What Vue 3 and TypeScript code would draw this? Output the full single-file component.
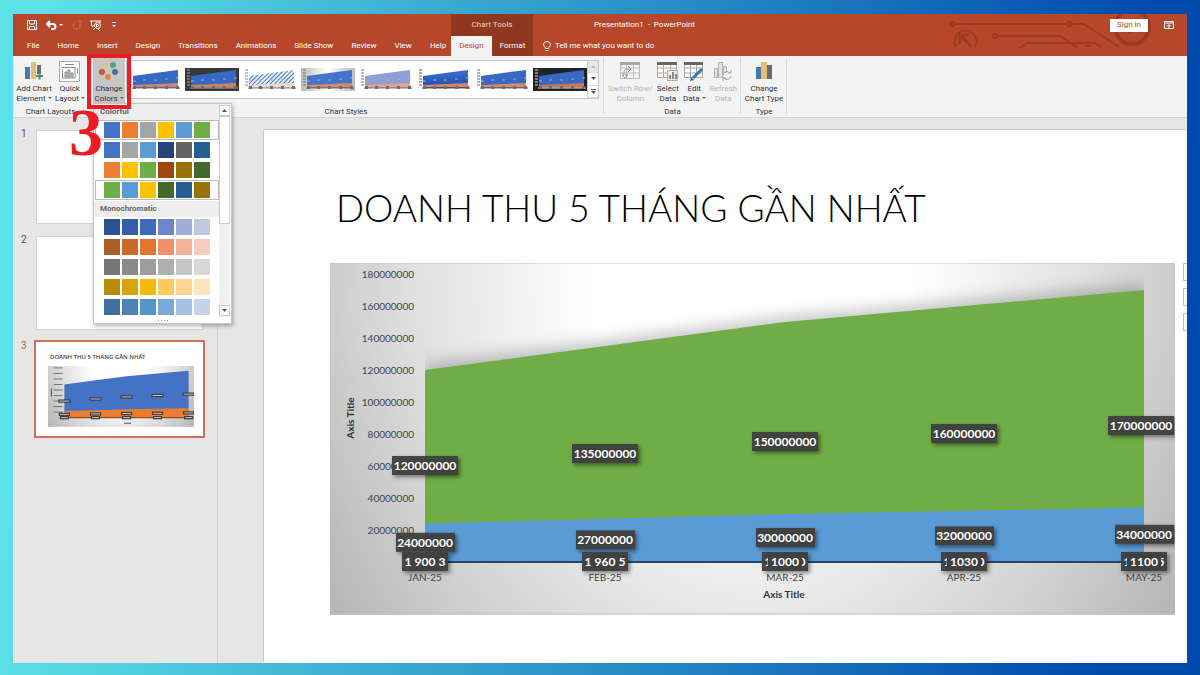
<script setup lang="ts">
interface Point { label: string; high: number; low: number; front: string; first: string; last: string }

const tabs: string[] = ['File', 'Home', 'Insert', 'Design', 'Transitions', 'Animations', 'Slide Show', 'Review', 'View', 'Help']

const points: Point[] = [
  { label: 'JAN-25', high: 120, low: 24, front: '900', first: '1', last: '3' },
  { label: 'FEB-25', high: 135, low: 27, front: '960', first: '1', last: '5' },
  { label: 'MAR-25', high: 150, low: 30, front: '1000', first: '1', last: '0' },
  { label: 'APR-25', high: 160, low: 32, front: '1030', first: '1', last: '0' },
  { label: 'MAY-25', high: 170, low: 34, front: '1100', first: '1', last: '5' },
]
const ticks: number[] = [180, 160, 140, 120, 100, 80, 60, 40, 20]

const baseY = 299
const px = (i: number): number => Math.round(95 + (i * 719) / 4)
const py = (v: number): number => baseY - v * 1.6
const area = (key: 'high' | 'low'): string =>
  `${px(0)},${baseY} ` + points.map((p, i) => `${px(i)},${py(p[key])}`).join(' ') + ` ${px(4)},${baseY}`
const highArea = area('high')
const lowArea = area('low')

const colorful: string[][] = [
  ['#4472c4', '#ed7d31', '#a5a5a5', '#ffc000', '#5b9bd5', '#70ad47'],
  ['#4472c4', '#a5a5a5', '#5b9bd5', '#264478', '#636363', '#255e91'],
  ['#ed7d31', '#ffc000', '#70ad47', '#9e480e', '#997300', '#43682b'],
  ['#70ad47', '#5b9bd5', '#ffc000', '#43682b', '#255e91', '#997300'],
]
const mono: string[][] = [
  ['#2b5293', '#355fa8', '#3f6bbd', '#6c86c9', '#a0add7', '#c1c9e2'],
  ['#ac5c25', '#c96a2c', '#e2772f', '#ef926b', '#f3b199', '#f5cdbf'],
  ['#777777', '#8a8a8a', '#9d9d9d', '#afafaf', '#c6c6c6', '#d7d7d7'],
  ['#b88c08', '#d8a40c', '#f3b90d', '#ffca5c', '#ffd591', '#ffe2bb'],
  ['#41709c', '#4c82b5', '#5794ca', '#79a9d6', '#a5c0e0', '#c4d5ea'],
]

interface Look { bg: string; fill: string; strip: string; ink: string }
const looks: Look[] = [
  { bg: '#ffffff', fill: '#3668c4', strip: '#c98a6c', ink: '#777777' },
  { bg: '#383838', fill: '#3668c4', strip: '#d28256', ink: '#a8a8a8' },
  { bg: '#ffffff', fill: 'url(#hatch)', strip: '#f0d8ca', ink: '#888888' },
  { bg: 'url(#softGrey)', fill: '#4474ca', strip: '#d58a68', ink: '#777777' },
  { bg: '#ffffff', fill: '#8f9fd6', strip: '#e3a48f', ink: '#777777' },
  { bg: '#ffffff', fill: 'url(#deepBlue)', strip: '#d98560', ink: '#555555' },
  { bg: '#ffffff', fill: '#3668c4', strip: '#dd8a62', ink: '#666666' },
  { bg: '#202328', fill: '#3668c4', strip: '#d2764a', ink: '#dddddd' },
]
</script>

<template>
  <div class="page">
    <div class="window">
      <header class="titlebar">
        <svg class="circuit" viewBox="0 0 204 34" width="204" height="34" fill="none" stroke="#9d3b21" stroke-width="2" aria-hidden="true">
          <circle cx="4" cy="10" r="2" /><path d="M7 10H118" /><circle cx="121" cy="10" r="2" /><path d="M124 10H136L171 33" />
          <circle cx="47" cy="22" r="2" /><path d="M50 22H112L129 33" />
          <path d="M72 34L79 29H137M143 29H147L153 33" /><circle cx="140" cy="30" r="2" />
          <path d="M8 33A11 11 0 1 1 27 33" stroke-width="2" /><path d="M12 30V21H21M12 21L23 32" stroke-width="3" />
          <circle cx="184" cy="13" r="17" stroke-width="4" /><path d="M172 17l6-5 4 5 8-6 5 6" stroke-width="4" />
        </svg>

        <div class="head-left">
          <div class="quick">
            <button aria-label="Save"><svg width="10" height="10" viewBox="0 0 10 10" fill="none" stroke="#fff"><path d="M.5.5h9v9h-9zM2.500.5v3.500h5v-3.500M2.500 9.500v-3h5v3" /></svg></button>
            <button aria-label="Undo"><svg width="17" height="10" viewBox="0 0 17 10" fill="none" stroke="#fff"><path d="M4 1L1 4l3 3M1.500 4H7a2 2 0 0 1 0 5H5" stroke-width="2" /><path d="M13 4h4l-2 2z" fill="#fff" stroke="none" /></svg></button>
            <button aria-label="Repeat"><svg width="9" height="10" viewBox="0 0 9 10" fill="none" stroke="#d0735a"><path d="M7.500 3.500A3.500 3.500 0 1 1 4 2M5 0h3v3" /></svg></button>
            <button aria-label="Start slide show"><svg width="12" height="11" viewBox="0 0 12 11" fill="none" stroke="#fff"><path d="M0 1h11M1.500 1v5h3M3 10l3-3M10 1v2" /><circle cx="7.500" cy="5.500" r="3" /><path d="M6.500 4v3l2.500-1.500zM8 9l2 2" /></svg></button>
            <button aria-label="Customize toolbar"><svg width="6" height="6" viewBox="0 0 6 6" fill="#fff"><path d="M1 0h4v1H1zM1 3h4L3 5z" /></svg></button>
          </div>
          <nav class="tabs">
            <button v-for="t in tabs" :key="t">{{ t }}</button>
          </nav>
        </div>

        <div class="context">
          <div class="context-title">Chart Tools</div>
          <div class="tabs">
            <button class="active">Design</button>
            <button>Format</button>
          </div>
        </div>

        <div class="head-right">
          <div class="caption">
            <span class="doc">Presentation1 &nbsp;-&nbsp; PowerPoint</span>
            <button class="sign">Sign in</button>
            <button class="display" aria-label="Ribbon display options"><svg width="10" height="8" viewBox="0 0 10 8" fill="none" stroke="#fff"><path d="M.5.5h9v7h-9zM1 2h8" /><path d="M5 7V4M3 5.500l2-2 2 2" /></svg></button>
          </div>
          <button class="tell">
            <svg width="8" height="11" viewBox="0 0 8 11" fill="none" stroke="#fff"><path d="M2.500 7.500C2.500 6 .5 5.500.5 3.500a3.500 3 0 0 1 7 0C7.500 5.500 5.500 6 5.500 7.500zM2.500 9.500h3" /></svg>
            Tell me what you want to do
          </button>
        </div>
      </header>

      <div class="ribbon">
        <section class="group layouts">
          <div class="tools">
            <button class="tool">
              <svg width="20" height="21" viewBox="0 0 20 21"><path d="M1 6h5v12H1z" fill="#4a7ba8" /><path d="M7 1h5v17H7z" fill="#e5bd72" /><path d="M13 4h4v9h-4z" fill="#6d6d6d" /><path d="M12 15h7M15.500 11.500v7" stroke="#4f9068" stroke-width="2" /></svg>
              <span>Add Chart<br />Element<i class="caret"></i></span>
            </button>
            <button class="tool">
              <svg width="21" height="21" viewBox="0 0 21 21" fill="none" stroke="#8a8a8a"><path d="M.5.5h20v20H.5z" fill="#fff" stroke="#aaa" /><path d="M6 3.500h9M3 6.500h14M3.500 9v8H16V6.500M18.500 7v5" /><path d="M6 11h2v5H6zM9 9h2v7H9zM12 12h2v4h-2z" fill="#ccc" /></svg>
              <span>Quick<br />Layout<i class="caret"></i></span>
            </button>
          </div>
          <h2>Chart Layouts</h2>
        </section>

        <section class="group styles">
          <div class="tools">
            <div class="picker">
              <button class="tool pressed">
                <svg width="20" height="21" viewBox="0 0 20 21"><circle cx="6" cy="4" r="3" fill="#e3c07d" /><circle cx="14" cy="4" r="3" fill="#5e9e80" /><circle cx="3" cy="11" r="3" fill="#cc5239" /><circle cx="16" cy="11" r="3" fill="#3f73a8" /><circle cx="9" cy="16" r="3" fill="#dd8b42" /></svg>
                <span>Change<br />Colors<i class="caret"></i></span>
              </button>
              <div class="menu">
                <div class="menu-main">
                  <div class="palette">
                    <h3>Colorful</h3>
                    <button v-for="(row, r) in colorful" :key="r" class="row" :class="{ marked: r === 0 || r === 3 }" :aria-label="'Colorful ' + (r + 1)">
                      <i v-for="c in row" :key="c" :style="{ background: c }"></i>
                    </button>
                    <h3 class="second">Monochromatic</h3>
                    <button v-for="(row, r) in mono" :key="r" class="row" :aria-label="'Monochromatic ' + (r + 1)">
                      <i v-for="c in row" :key="c" :style="{ background: c }"></i>
                    </button>
                  </div>
                  <div class="scroll">
                    <button aria-label="Scroll up"><svg width="5" height="3" viewBox="0 0 5 3"><path d="M0 3L2.500 0 5 3z" fill="#555" /></svg></button>
                    <div class="thumb"></div>
                    <button class="down" aria-label="Scroll down"><svg width="5" height="3" viewBox="0 0 5 3"><path d="M0 0h5L2.500 3z" fill="#555" /></svg></button>
                  </div>
                </div>
                <div class="grip"><b></b><b></b><b></b><b></b></div>
              </div>
              <div class="frame"></div>
              <div class="step">3</div>
            </div>
            <div class="gallery">
              <div class="looks">
                <button v-for="(k, n) in looks" :key="n" :aria-label="'Style ' + (n + 1)">
                  <svg width="54" height="23" viewBox="0 0 54 23">
                    <defs v-if="n === 0">
                      <pattern id="hatch" width="3" height="3" patternUnits="userSpaceOnUse" patternTransform="rotate(-45)"><path d="M0 0h3v3H0z" fill="#e8f0fb" /><path d="M0 0h3v1H0z" fill="#4478c8" /></pattern>
                      <linearGradient id="softGrey"><stop offset="0" stop-color="#bbb" /><stop offset="0.500" stop-color="#fff" /><stop offset="1" stop-color="#bbb" /></linearGradient>
                      <linearGradient id="deepBlue" x2="0" y2="1"><stop offset="0" stop-color="#3c6fd0" /><stop offset="1" stop-color="#1f4fae" /></linearGradient>
                    </defs>
                    <path d="M0 0h54v23H0z" :fill="k.bg" />
                    <path d="M6 8L28 5 51 2V20H6z" :fill="k.fill" />
                    <path d="M6 17l45-2v4H6z" :fill="k.strip" />
                    <path d="M2 2h3M2 5h3M2 8h3M2 11h3M2 14h3M2 17h3M5 20h48" :stroke="k.ink" />
                    <path d="M6 13h3M16 12h3M27 12h3M38 11h3M49 10h3" stroke="#93aede" />
                    <path d="M6 18h3v3H6zM16 18h3v3h-3zM27 18h3v3h-3zM38 18h3v3h-3zM49 18h3v3h-3z" fill="#8a6358" />
                  </svg>
                </button>
              </div>
              <div class="steps">
                <button disabled aria-label="Previous styles"><svg width="5" height="3" viewBox="0 0 5 3"><path d="M0 3L2.500 0 5 3z" fill="#bbb" /></svg></button>
                <button aria-label="Next styles"><svg width="5" height="3" viewBox="0 0 5 3"><path d="M0 0h5L2.500 3z" fill="#555" /></svg></button>
                <button aria-label="More styles"><svg width="5" height="5" viewBox="0 0 5 5"><path d="M0 0h5v1H0zM0 2h5L2.500 5z" fill="#555" /></svg></button>
              </div>
            </div>
          </div>
          <h2>Chart Styles</h2>
        </section>

        <section class="group data">
          <div class="tools">
            <button class="tool" disabled>
              <svg width="20" height="20" viewBox="0 0 20 20" fill="none" stroke="#bdbdbd"><path d="M.5 2.500h19v15H.5zM.5 7h19M.5 12h19M6.500 3v14M13.500 3v14" /><path d="M0 1h20v3H0z" fill="#a8a8a8" stroke="none" /><path d="M4 14V11q0-3 5-3h2M8 5l3 3-3 3M4 14H2l3 3 3-3H5" stroke="#999" /></svg>
              <span>Switch Row/<br />Column</span>
            </button>
            <button class="tool">
              <svg width="21" height="20" viewBox="0 0 21 20" fill="none" stroke="#b9a08f"><path d="M.5 2.500h19v14H.5zM.5 7h19M.5 12h19M6.500 3v14M13.500 3v14" fill="#fff" /><path d="M0 1h20v3H0z" fill="#666" stroke="none" /><path d="M10.500 9.500h10v10h-10z" fill="#e8e8e8" stroke="#aaa" /><path d="M12 14h2v4h-2zM15 11h2v7h-2zM18 13h2v5h-2z" fill="#8c8c8c" stroke="none" /></svg>
              <span>Select<br />Data</span>
            </button>
            <button class="tool">
              <svg width="21" height="20" viewBox="0 0 21 20" fill="none" stroke="#a5a5a5"><path d="M.5 2.500h18v14H.5zM.5 7h18M.5 12h18M6.500 3v14M12.500 3v14" fill="#fff" /><path d="M0 1h19v3H0z" fill="#666" stroke="none" /><path d="M9 17L18 8" stroke="#3d76ad" stroke-width="3" /><path d="M6 20l1-4 3 3z" fill="#2f6397" stroke="none" /></svg>
              <span>Edit<br />Data<i class="caret"></i></span>
            </button>
            <button class="tool" disabled>
              <svg width="20" height="20" viewBox="0 0 20 20" fill="#e4e4e4" stroke="#b4b4b4"><path d="M1.500 7.500h3v9h-3zM5.500 1.500h4v15h-4zM10.500 5.500h3v6h-3z" /><path d="M10 14a4 4 0 0 1 7-2M18 9v3h-3M18 15a4 4 0 0 1-7 2M10 20v-3h3" fill="none" stroke="#9f9f9f" /></svg>
              <span>Refresh<br />Data</span>
            </button>
          </div>
          <h2>Data</h2>
        </section>

        <section class="group type">
          <div class="tools">
            <button class="tool">
              <svg width="16" height="21" viewBox="0 0 16 21"><path d="M0 6h5v12H0z" fill="#4477a8" /><path d="M5 1h6v17H5z" fill="#e5bd72" /><path d="M11 4h5v14h-5z" fill="#6a6a6a" /></svg>
              <span>Change<br />Chart Type</span>
            </button>
          </div>
          <h2>Type</h2>
        </section>
      </div>

      <main class="work">
        <aside class="slides">
          <div class="slot"><span>1</span><button class="mini" aria-label="Slide 1"></button></div>
          <div class="slot"><span>2</span><button class="mini" aria-label="Slide 2"></button></div>
          <div class="slot current">
            <span>3</span>
            <button class="mini">
              <em>DOANH THU 5 THÁNG GẦN NHẤT</em>
              <svg viewBox="0 0 845 352" aria-hidden="true">
                <rect width="845" height="352" fill="url(#wall)" /><rect width="845" height="352" fill="url(#fall)" />
                <polygon :points="highArea" fill="#4472c4" /><polygon :points="lowArea" fill="#ed7d31" />
                <path d="M95 299H814" stroke="#8b4a20" stroke-width="8" />
                <path v-for="t in ticks" :key="t" :d="`M32 ${py(t)}H84`" stroke="#777" stroke-width="6" />
                <path d="M20 130v46M440 331h40" stroke="#555" stroke-width="6" />
                <g v-for="(p, i) in points" :key="p.label" stroke="#3c3c3c" stroke-width="7" fill="#ddd">
                  <rect :x="px(i) - 32" :y="py(p.high / 2) - 6" width="64" height="12" />
                  <rect :x="px(i) - 29" :y="py(p.low / 2) - 6" width="58" height="12" />
                  <rect :x="px(i) - 23" :y="baseY - 6" width="46" height="12" />
                </g>
              </svg>
            </button>
          </div>
        </aside>

        <section class="canvas">
          <article class="slide">
            <h1>DOANH THU 5 THÁNG GẦN NHẤT</h1>
            <div class="chart-row">
              <svg class="chart" viewBox="0 0 845 352" role="img" aria-label="Area chart">
                <defs>
                  <radialGradient id="wall" gradientUnits="userSpaceOnUse" cx="422" cy="0" r="450" gradientTransform="scale(1 2)">
                    <stop offset="0" stop-color="#fff" /><stop offset="0.350" stop-color="#fff" /><stop offset="0.750" stop-color="#e0e0e0" /><stop offset="1" stop-color="#c6c6c6" />
                  </radialGradient>
                  <linearGradient id="fall" x2="0" y2="1"><stop offset="0.200" stop-opacity="0" /><stop offset="1" stop-opacity="0.080" /></linearGradient>
                  <clipPath id="plot"><rect x="95" y="1" width="719" height="299" /></clipPath>
                  <filter id="soft" x="-10%" y="-20%" width="120%" height="140%"><feGaussianBlur stdDeviation="8" /></filter>
                  <filter id="drop" x="-20%" y="-40%" width="150%" height="200%"><feDropShadow dx="2" dy="2" stdDeviation="2" flood-opacity="0.500" /></filter>
                </defs>
                <rect width="845" height="352" fill="url(#wall)" /><rect width="845" height="352" fill="url(#fall)" />
                <path d="M0 0H845M0 351H845" stroke="#c4c4c4" />
                <g clip-path="url(#plot)">
                  <polygon :points="highArea" fill="#000" fill-opacity="0.240" filter="url(#soft)" transform="translate(0 -5)" />
                  <polygon :points="highArea" fill="#70ad47" />
                  <polygon :points="lowArea" fill="#5b9bd5" />
                </g>
                <path d="M95 299H814" stroke="#24466b" stroke-width="2" />
                <g class="axis">
                  <text v-for="t in ticks" :key="t" x="84" :y="py(t) + 4" text-anchor="end">{{ t }}000000</text>
                  <text v-for="(p, i) in points" :key="p.label" :x="px(i)" y="318" text-anchor="middle">{{ p.label }}</text>
                </g>
                <text class="axis-title" x="454" y="335" text-anchor="middle">Axis Title</text>
                <text class="axis-title" transform="translate(24 155) rotate(-90)" text-anchor="middle">Axis Title</text>
                <g v-for="(p, i) in points" :key="p.label" class="tag">
                  <g :transform="`translate(${Math.min(px(i), 811)} ${py(p.high / 2)})`">
                    <rect x="-33" y="-10" width="66" height="19" filter="url(#drop)" /><text y="4">{{ p.high }}000000</text>
                  </g>
                  <g :transform="`translate(${px(i)} ${py(p.low / 2)})`">
                    <rect x="-29" y="-10" width="59" height="19" filter="url(#drop)" /><text y="4">{{ p.low }}000000</text>
                  </g>
                  <g :transform="`translate(${px(i)} ${baseY})`">
                    <rect x="-23" y="-10" width="46" height="19" filter="url(#drop)" />
                    <text x="-17" y="4">{{ p.first }}</text><text x="17" y="4">{{ p.last }}</text>
                    <rect class="solid" :x="3 - p.front.length * 5" y="-9" :width="p.front.length * 10 - 6" height="17" />
                    <text y="4">{{ p.front }}</text>
                  </g>
                </g>
              </svg>
              <div class="side">
                <button aria-label="Chart elements"></button><button aria-label="Chart styles"></button><button aria-label="Chart filters"></button>
              </div>
            </div>
          </article>
        </section>
      </main>
    </div>
  </div>
</template>

<style>
body { margin: 0; }
</style>

<style scoped>
* { box-sizing: border-box; }
button { border: 0; padding: 0; margin: 0; background: none; font: inherit; color: inherit; white-space: nowrap; }
h1, h2, h3 { margin: 0; font-weight: 400; }
svg { display: block; flex: none; }

.page {
  min-height: 100vh; padding: 14px 13px 12px; display: flex;
  background: linear-gradient(95deg, #5ce1e6 4%, #004aad 92%);
  font: 8px/10px Roboto, "Open Sans", sans-serif; color: #333;
}
.window { flex: 1; min-width: 0; display: flex; flex-direction: column; overflow: hidden; background: #e6e6e6; }

.titlebar { position: relative; display: flex; flex: none; height: 42px; background: #b7472a; color: #fff; }
.circuit { position: absolute; right: 35px; top: 0; }
.head-left, .context, .head-right { display: flex; flex-direction: column; }
.head-left { width: 438px; }
.quick { height: 22px; display: flex; align-items: center; gap: 9px; padding-left: 14px; }
.tabs { height: 20px; display: flex; }
.tabs button { padding: 0 9px; }
.head-left .tabs { padding: 0 3px 0 5px; justify-content: space-between; }
.context { width: 82px; background: #8f3820; }
.context-title { height: 22px; line-height: 22px; text-align: center; color: #f0cfc4; }
.context .tabs button { flex: 1; padding: 0; }
.context .tabs .active { background: #f3f3f3; color: #b7472a; }
.head-right { position: relative; flex: 1; }
.caption { height: 22px; display: flex; align-items: center; padding: 0 13px 0 61px; }
.doc { margin-right: auto; }
.sign { width: 38px; height: 13px; background: #fff; color: #b7472a; }
.display { margin-left: 16px; }
.tell { height: 20px; display: flex; align-items: center; gap: 4px; padding-left: 10px; align-self: flex-start; }

.head-left .tabs { padding-right: 8px; }

.ribbon { position: relative; z-index: 2; display: flex; flex: none; height: 62px; background: #f3f3f3; border-bottom: 1px solid #d4d4d4; }
.group { display: flex; flex-direction: column; padding-top: 5px; position: relative; }
.group h2 { font-size: 8px; line-height: 10px; text-align: center; color: #333; margin-top: 3px; }
.tools { display: flex; justify-content: center; height: 43px; }
.tool { display: flex; flex-direction: column; align-items: center; justify-content: space-between; height: 43px; }
.tool:disabled { color: #b4b4b4; }
.caret { display: inline-block; margin: 0 0 2px 2px; border: 2px solid transparent; border-top-color: #666; border-bottom: 0; }
.layouts { width: 75px; }
.layouts .tools { gap: 3px; }
.styles { width: 516px; }
.styles::after, .data::after, .type::after { content: ""; position: absolute; right: 0; top: 2px; bottom: 3px; width: 1px; background: #dadada; }
.styles .tools { justify-content: flex-start; padding-left: 5px; }
.data { width: 137px; }
.data .tools { justify-content: space-between; padding: 0 4px; }
.type { width: 46px; }

.picker { position: relative; width: 32px; }
.pressed { width: 32px; background: #c6c6c6; box-shadow: 0 -3px #c6c6c6; }
.frame { position: absolute; left: -6px; top: -7px; width: 44px; height: 55px; border: 4px solid #ed1c24; z-index: 5; pointer-events: none; }
.step { position: absolute; left: -24px; top: 36px; z-index: 6; font: bold 68px/70px "Liberation Serif", serif; color: #ed1c24; }
.menu { position: absolute; left: 0; top: 42px; width: 139px; z-index: 4; background: #fff; border: 1px solid #c6c6c6; box-shadow: 1px 2px 4px rgba(0, 0, 0, 0.3); }
.menu-main { display: flex; }
.palette { flex: 1; }
.palette h3 { height: 16px; padding-left: 6px; font-size: 8px; line-height: 16px; font-weight: 700; background: #eee; color: #666; }
.palette .second { margin-top: 1px; }
.row { display: flex; gap: 2px; width: 124px; height: 20px; margin-left: 1px; padding: 1px 0 1px 8px; border: 1px solid transparent; }
.row.marked { border-color: #bbb; }
.row i { width: 16px; height: 16px; }
.scroll { width: 11px; margin-right: 1px; display: flex; flex-direction: column; background: #f0f0f0; padding: 1px 0; }
.scroll button { height: 11px; border: 1px solid #ccc; background: #fff; display: grid; place-items: center; }
.scroll .thumb { height: 108px; border: 1px solid #ccc; background: #fff; }
.scroll .down { margin-top: auto; }
.grip { height: 6px; display: flex; gap: 2px; align-items: center; justify-content: center; }
.grip b { width: 1px; height: 1px; background: #999; }

.gallery { display: flex; margin-left: 1px; height: 39px; border: 1px solid #c8c8c8; background: #fff; margin-top: -1px; }
.looks { display: flex; align-items: center; gap: 4px; }
.looks button { height: 23px; }
.steps { display: flex; flex-direction: column; width: 11px; border-left: 1px solid #ccc; }
.steps button { flex: 1; display: grid; place-items: center; border-bottom: 1px solid #ddd; }
.steps button:disabled { background: #e6e6e6; }

.work { flex: 1; display: flex; min-height: 0; }
.slides { width: 205px; flex: none; padding: 12px 14px 0 8px; border-right: 1px solid #d2d2d2; display: flex; flex-direction: column; gap: 12px; }
.slot { display: flex; gap: 10px; font-size: 10px; line-height: 8px; color: #555; }
.slot span { width: 5px; }
.mini { flex: 1; height: 94px; background: #fff; border: 1px solid #d2d2d2; text-align: left; }
.current { color: #c8563c; }
.current .mini { border-color: #fff; outline: 2px solid #d0705a; padding: 0 8px 0 11px; }
.mini em { display: block; font: 500 6px/12px "Noto Sans", sans-serif; color: #333; padding-left: 2px; margin-bottom: 3px; }
.mini svg { width: 100%; }

.canvas { flex: 1; min-width: 0; padding: 12px 0 0 46px; display: flex; }
.slide { flex: 1; min-width: 0; background: #fff; box-shadow: -1px -1px #c8c8c8; padding: 46px 0 0 66px; }
h1 { font: 300 37px/64px Lato, "Open Sans", sans-serif; color: #000; padding-left: 6px; white-space: nowrap; margin-bottom: 23px; }
.chart-row { display: flex; gap: 8px; }
.chart { flex: 1; min-width: 0; font-family: Lato, "Open Sans", sans-serif; }
.axis text { font-size: 10px; fill: #444; }
.axis-title { font-size: 10px; font-weight: 700; fill: #333; }
.tag rect { fill: #404040; fill-opacity: 0.94; }
.tag .solid { fill-opacity: 1; }
.tag text { font-size: 12px; font-weight: 700; fill: #fff; text-anchor: middle; }
.side { width: 4px; overflow: hidden; display: flex; flex-direction: column; gap: 7px; }
.side button { width: 18px; height: 18px; flex: none; border: 1px solid #b4c6ca; background: #fff; }
</style>
